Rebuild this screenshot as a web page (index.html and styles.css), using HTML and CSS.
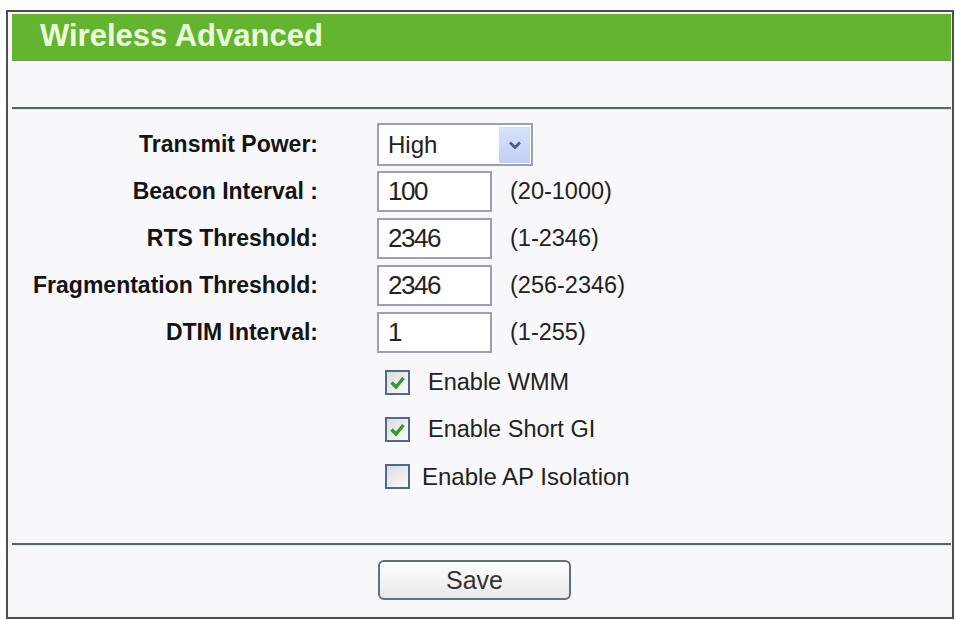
FILE: index.html
```html
<!DOCTYPE html>
<html>
<head>
<meta charset="utf-8">
<title>Wireless Advanced</title>
<link rel="stylesheet" href="styles.css">
</head>
<body>
<div class="frame">
  <div class="header">Wireless Advanced</div>
  <div class="spacer"></div>
  <div class="rule"></div>
  <div class="form">
    <div class="label">Transmit Power:</div>
    <div class="field">
      <div class="select">
        <span class="select-value">High</span>
        <span class="select-btn">
          <svg width="14" height="10" viewBox="0 0 14 10"><path d="M2 2.5 L7 7.5 L12 2.5" fill="none" stroke="#4a5f86" stroke-width="2.8"/></svg>
        </span>
      </div>
    </div>

    <div class="label">Beacon Interval :</div>
    <div class="field"><div class="input">100</div><span class="range">(20-1000)</span></div>

    <div class="label">RTS Threshold:</div>
    <div class="field"><div class="input">2346</div><span class="range">(1-2346)</span></div>

    <div class="label">Fragmentation Threshold:</div>
    <div class="field"><div class="input">2346</div><span class="range">(256-2346)</span></div>

    <div class="label">DTIM Interval:</div>
    <div class="field"><div class="input">1</div><span class="range">(1-255)</span></div>
  </div>

  <div class="checks">
    <div class="check-row">
      <span class="box checked"><svg width="17" height="15" viewBox="0 0 17 15"><path d="M2.5 7.5 L7 12 L14.5 3" fill="none" stroke="#2f9b2f" stroke-width="3.4"/></svg></span>
      <span class="check-label">Enable WMM</span>
    </div>
    <div class="check-row">
      <span class="box checked"><svg width="17" height="15" viewBox="0 0 17 15"><path d="M2.5 7.5 L7 12 L14.5 3" fill="none" stroke="#2f9b2f" stroke-width="3.4"/></svg></span>
      <span class="check-label">Enable Short GI</span>
    </div>
    <div class="check-row">
      <span class="box"></span>
      <span class="check-label tight">Enable AP Isolation</span>
    </div>
  </div>

  <div class="rule bottom-rule"></div>
  <div class="actions">
    <button class="save">Save</button>
  </div>
</div>
</body>
</html>
```
FILE: styles.css
```css
html, body {
  margin: 0;
  padding: 0;
  background: #ffffff;
}

body {
  font-family: "Liberation Sans", Arial, sans-serif;
  color: #1e1e1e;
}

.frame {
  margin: 10px 0 0 6px;
  border: 2px solid #4e4e4e;
  background: #f8f8fa;
  padding: 2px 1px 0 4px;
  box-sizing: border-box;
  width: 948px;
  height: 609px;
  display: flex;
  flex-direction: column;
}

.header {
  height: 47px;
  background: #63b42f;
  border-bottom: 1px solid #6f9f55;
  box-sizing: border-box;
  color: #ecfbdc;
  font-weight: bold;
  font-size: 31px;
  line-height: 44px;
  padding-left: 28px;
}

.spacer {
  height: 46px;
}

.rule {
  height: 2px;
  background: #4f6d5f;
  box-shadow: 0 1px 0 #cfeee0;
}

.form {
  display: grid;
  grid-template-columns: 306px auto;
  grid-auto-rows: 47px;
  column-gap: 59px;
  align-items: center;
  padding-top: 12px;
}

.label {
  text-align: right;
  font-weight: bold;
  font-size: 23px;
  color: #141414;
}

.field {
  display: flex;
  align-items: center;
}

.select {
  width: 156px;
  height: 43px;
  box-sizing: border-box;
  border: 2px solid #9aa3ad;
  background: #ffffff;
  display: flex;
  align-items: center;
  justify-content: space-between;
  padding: 0 1px 0 9px;
}

.select-value {
  font-size: 24px;
  color: #222;
}

.select-btn {
  width: 31px;
  height: 36px;
  background: linear-gradient(#d6e2fb, #c0d1f3);
  display: flex;
  align-items: center;
  justify-content: center;
}

.input {
  width: 115px;
  height: 41px;
  box-sizing: border-box;
  border: 2px solid #9aa3ad;
  background: #ffffff;
  font-size: 26px;
  line-height: 37px;
  padding-left: 9px;
  color: #222;
  letter-spacing: -1.5px;
}

.range {
  margin-left: 18px;
  font-size: 23.5px;
  color: #222;
}

.checks {
  display: flex;
  flex-direction: column;
  padding-left: 373px;
  padding-top: 3px;
}

.check-row {
  height: 47px;
  display: flex;
  align-items: center;
}

.box {
  width: 25px;
  height: 25px;
  box-sizing: border-box;
  border: 2px solid #4d6a93;
  background: linear-gradient(135deg, #dcdcdc, #fbfbfb);
  display: flex;
  align-items: center;
  justify-content: center;
}

.check-label {
  margin-left: 18px;
  font-size: 23.5px;
  color: #222;
}

.check-label.tight {
  margin-left: 12px;
  font-size: 24px;
}

.bottom-rule {
  margin-top: 43px;
}

.actions {
  display: flex;
  padding-left: 366px;
  padding-top: 15px;
}

.save {
  width: 193px;
  height: 40px;
  border: 2px solid #5f6f85;
  border-radius: 6px;
  background: linear-gradient(#ffffff, #e9e9e9);
  font-family: "Liberation Sans", Arial, sans-serif;
  font-size: 25px;
  color: #333;
  padding: 0;
}
```
